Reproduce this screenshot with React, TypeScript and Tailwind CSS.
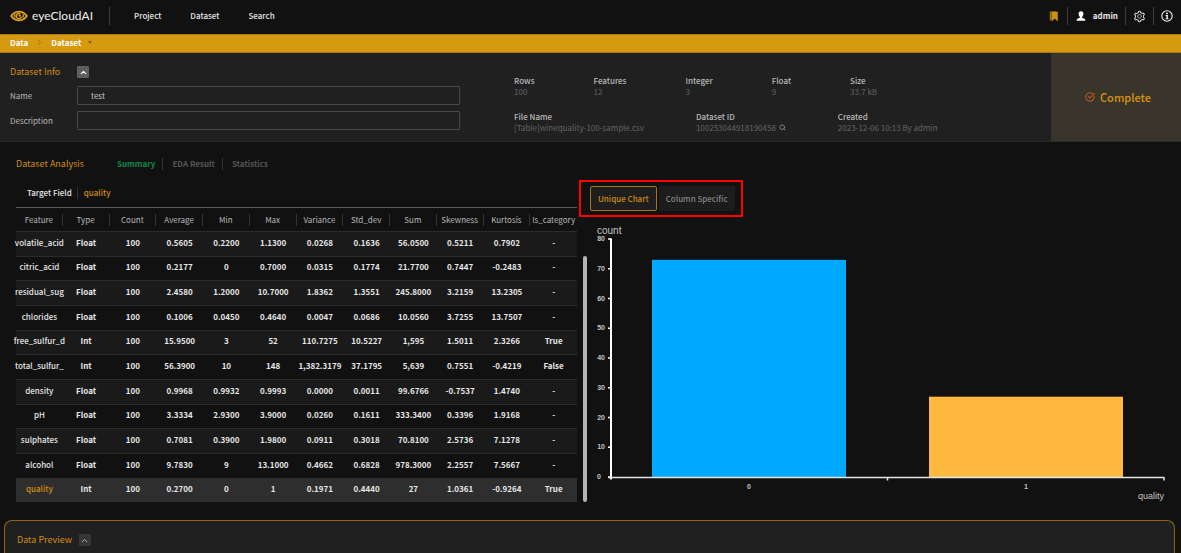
import React from 'react';
import { ChevronRight, ChevronUp, CircleCheckBig, Search } from 'lucide-react';
import { AiOutlineSetting } from 'react-icons/ai';

const columns = [
  'Feature', 'Type', 'Count', 'Average', 'Min', 'Max',
  'Variance', 'Std_dev', 'Sum', 'Skewness', 'Kurtosis', 'Is_category',
];

const rows = [
  ['volatile_acid', 'Float', '100', '0.5605', '0.2200', '1.1300', '0.0268', '0.1636', '56.0500', '0.5211', '0.7902', '-'],
  ['citric_acid', 'Float', '100', '0.2177', '0', '0.7000', '0.0315', '0.1774', '21.7700', '0.7447', '-0.2483', '-'],
  ['residual_sug', 'Float', '100', '2.4580', '1.2000', '10.7000', '1.8362', '1.3551', '245.8000', '3.2159', '13.2305', '-'],
  ['chlorides', 'Float', '100', '0.1006', '0.0450', '0.4640', '0.0047', '0.0686', '10.0560', '3.7255', '13.7507', '-'],
  ['free_sulfur_d', 'Int', '100', '15.9500', '3', '52', '110.7275', '10.5227', '1,595', '1.5011', '2.3266', 'True'],
  ['total_sulfur_', 'Int', '100', '56.3900', '10', '148', '1,382.3179', '37.1795', '5,639', '0.7551', '-0.4219', 'False'],
  ['density', 'Float', '100', '0.9968', '0.9932', '0.9993', '0.0000', '0.0011', '99.6766', '-0.7537', '1.4740', '-'],
  ['pH', 'Float', '100', '3.3334', '2.9300', '3.9000', '0.0260', '0.1611', '333.3400', '0.3396', '1.9168', '-'],
  ['sulphates', 'Float', '100', '0.7081', '0.3900', '1.9800', '0.0911', '0.3018', '70.8100', '2.5736', '7.1278', '-'],
  ['alcohol', 'Float', '100', '9.7830', '9', '13.1000', '0.4662', '0.6828', '978.3000', '2.2557', '7.5667', '-'],
  ['quality', 'Int', '100', '0.2700', '0', '1', '0.1971', '0.4440', '27', '1.0361', '-0.9264', 'True'],
];

const bars = [
  { label: '0', value: 73, fill: '#00a8ff', x: 62 },
  { label: '1', value: 27, fill: '#ffb840', x: 339 },
];

const yOf = (value: number) => 257 - value * 2.975;

function EyeLogo() {
  return (
    <svg viewBox="0 0 18 12" className="h-3 w-[18px]" fill="none" aria-hidden="true">
      <path d="M1.200 6C3.400 2.800 6 1.600 9 1.600S14.600 2.800 16.800 6C14.600 9.200 12 10.400 9 10.400S3.400 9.200 1.200 6Z" stroke="#e0a01a" strokeWidth="1.900" />
      <path d="M3.600 6C4.300 4.700 5 4 5.800 3.600C5.100 5 5.100 7 5.800 8.400C5 8 4.300 7.300 3.600 6ZM14.400 6C13.700 4.700 13 4 12.200 3.600C12.900 5 12.900 7 12.200 8.400C13 8 13.700 7.300 14.400 6Z" fill="#e0a01a" />
      <path d="M10.500 4A2.600 2.600 0 1 0 11.500 6.500" stroke="#e0a01a" strokeWidth="1.500" />
      <circle cx="9.600" cy="5.600" r="1.200" fill="#e0a01a" />
    </svg>
  );
}

function BookmarkIcon() {
  return (
    <svg viewBox="0 0 10 11" className="h-[11px] w-[10px]" aria-hidden="true">
      <path d="M0.800 0.500H7V1.300H2.300V8.500L0.800 10Z" fill="#a87808" />
      <path d="M2.500 0.800H8.800V10.500L5.700 7.500L2.500 10.500Z" fill="#c9920f" />
    </svg>
  );
}

function UserIcon() {
  return (
    <svg viewBox="0 0 10 10" className="size-[10px]" fill="#fff" aria-hidden="true">
      <path d="M5 0.200C6.700 0.200 7.500 1.400 7.400 2.900C7.300 4.200 6.800 5.100 6.200 5.700V6.700C7.800 7.300 9.400 7.700 9.500 9.700H0.500C0.600 7.700 2.200 7.300 3.800 6.700V5.700C3.200 5.100 2.700 4.200 2.600 2.900C2.500 1.400 3.300 0.200 5 0.200Z" />
    </svg>
  );
}

function InfoIcon() {
  return (
    <svg viewBox="0 0 12 12" className="size-3" fill="none" aria-hidden="true">
      <circle cx="6" cy="6" r="5.200" stroke="#f0f0f0" strokeWidth="1.100" />
      <circle cx="6" cy="3.400" r="0.900" fill="#fff" />
      <path d="M4.700 5.100H6.800V8.500H7.600V9.300H4.600V8.500H5.400V5.900H4.700Z" fill="#fff" />
    </svg>
  );
}

function Stat({ label, children }: { label: string; children: React.ReactNode }) {
  return (
    <div className="whitespace-nowrap">
      <dt className="font-medium leading-[11px] text-[#b8b8b8]">{label}</dt>
      <dd className="flex items-center gap-[3px] leading-[11px] text-[#636363]">{children}</dd>
    </div>
  );
}

function CountChart() {
  return (
    <svg viewBox="0 0 591 290" className="block w-full font-['Liberation_Sans',sans-serif]" role="img" aria-label="Count by quality">
      <text x="7" y="14" fontSize="10" fill="#c4c4c4">count</text>
      {bars.map((bar) => (
        <rect key={bar.label} x={bar.x} y={yOf(bar.value)} width="194" height={257 - yOf(bar.value)} fill={bar.fill} />
      ))}
      <g fill="#c4c4c4" fontSize="7" fontWeight="700">
        {[0, 10, 20, 30, 40, 50, 60, 70, 80].map((tick) => (
          <g key={tick}>
            <path d={`M18 ${yOf(tick)}H21`} stroke="#fff" strokeWidth="1.500" />
            <text x={tick === 0 ? 11 : 15} y={yOf(tick) + 2} textAnchor="end">{tick}</text>
          </g>
        ))}
        <text x="159" y="269" textAnchor="middle">0</text>
        <text x="436" y="269" textAnchor="middle">1</text>
      </g>
      <path d="M21 18.500V259.500" stroke="#fff" strokeWidth="2" />
      <path d="M18 257.500H574.500M297.500 257V260.500M574 257V260.500" stroke="#e4e4e4" strokeWidth="1.500" />
      <text x="574" y="279" fontSize="9" fill="#c4c4c4" textAnchor="end">quality</text>
    </svg>
  );
}

export default function App() {
  return (
    <div className="flex min-h-screen flex-col bg-[#111111] font-['Noto_Sans_CJK_KR','Noto_Sans',sans-serif] text-[8px] leading-3 text-[#e6e6e6]">
      <header className="flex h-[34px] items-center justify-between pr-2 pl-[10px]">
        <div className="flex h-full items-center pb-[2px]">
          <a href="#" className="flex items-center gap-1">
            <EyeLogo />
            <span className="font-['Lato',sans-serif] text-[12px] leading-4 text-[#efefef]">eyeCloudAI</span>
          </a>
          <nav className="ml-4 flex items-center gap-[29px] border-l border-[#3c3c3c] py-[3px] pl-6 font-medium">
            <a href="#">Project</a>
            <a href="#">Dataset</a>
            <a href="#">Search</a>
          </nav>
        </div>
        <div className="flex items-center pb-[2px]">
          <button aria-label="Bookmarks" className="pr-2"><BookmarkIcon /></button>
          <button className="flex h-[18px] items-center gap-[7px] border-l border-[#3c3c3c] pr-[7px] pl-2 font-bold">
            <UserIcon />
            admin
          </button>
          <button aria-label="Settings" className="h-[18px] border-x border-[#3c3c3c] px-[7px]">
            <AiOutlineSetting className="size-[13px] text-[#dcdcdc]" />
          </button>
          <button aria-label="About" className="pl-[7px]"><InfoIcon /></button>
        </div>
      </header>

      <nav aria-label="Breadcrumb" className="flex h-[19px] items-center border-y border-[#a97a10] bg-[#d69a10] px-[10px] pb-[2px] font-bold text-white">
        <a href="#">Data</a>
        <ChevronRight className="mx-[7px] size-[9px] text-[#8a6a24]" />
        <button className="flex items-center gap-[7px]">
          Dataset
          <svg viewBox="0 0 4 3" className="h-[3px] w-1" aria-hidden="true"><path d="M0 0H4L2 3Z" fill="#7d6020" /></svg>
        </button>
      </nav>

      <section className="flex h-[89px] border-b border-[#2a2a2a] bg-[#202020]">
        <div className="w-[460px] shrink-0 pt-3 pl-[10px]">
          <div className="flex items-center">
            <h2 className="w-[67px] text-[9px] leading-[14px] text-[#d08c10]">Dataset Info</h2>
            <button aria-label="Collapse dataset info" className="flex size-3 items-center justify-center rounded-[1px] bg-[#5e5e5e]">
              <ChevronUp className="size-[9px] text-white" strokeWidth={3} />
            </button>
          </div>
          <div className="mt-[7px] flex items-center">
            <label htmlFor="name" className="w-[67px] text-[#b8b8b8]">Name</label>
            <input id="name" defaultValue="test" className="h-[19px] min-w-0 flex-1 rounded-[1px] border border-[#484848] bg-transparent px-[13px] text-[#c8c8c8]" />
          </div>
          <div className="mt-[6px] flex items-center">
            <label htmlFor="description" className="w-[67px] text-[#b8b8b8]">Description</label>
            <input id="description" className="h-[19px] min-w-0 flex-1 rounded-[1px] border border-[#484848] bg-transparent px-[13px] text-[#c8c8c8]" />
          </div>
        </div>
        <div className="flex flex-1 flex-col gap-[14px] pt-[22px] pl-[54px]">
          <dl className="flex gap-[59px]">
            <Stat label="Rows">100</Stat>
            <Stat label="Features">12</Stat>
            <Stat label="Integer">3</Stat>
            <Stat label="Float">9</Stat>
            <Stat label="Size">33.7 kB</Stat>
          </dl>
          <dl className="flex gap-[52px]">
            <Stat label="File Name">[Table]winequality-100-sample.csv</Stat>
            <Stat label="Dataset ID">
              100253044918190458
              <button aria-label="Look up dataset"><Search className="size-[7px] text-[#8a8a8a]" strokeWidth={3} /></button>
            </Stat>
            <Stat label="Created">2023-12-06 10:13 By admin</Stat>
          </dl>
        </div>
        <div className="flex w-[130px] shrink-0 items-center justify-center gap-[5px] bg-[#3a352a] pl-1 text-[11px] font-medium text-[#d8960f]">
          <CircleCheckBig className="size-[10px] text-[#c05f20]" strokeWidth={2.5} />
          Complete
        </div>
      </section>

      <main className="flex h-[378px] pb-[18px]">
        <section className="w-[590px] shrink-0 pt-4 pl-4">
          <div className="flex items-center">
            <h2 className="w-[101px] text-[9px] text-[#d08c10]">Dataset Analysis</h2>
            <div className="flex divide-x divide-[#333333] font-bold text-[#555555]">
              <button className="pr-[7px] text-[#0c8a48]">Summary</button>
              <button className="pr-[7px] pl-[9px]">EDA Result</button>
              <button className="pl-[9px]">Statistics</button>
            </div>
          </div>
          <div className="mt-[17px] flex pl-[11px] font-medium">
            <span className="pr-[5px]">Target Field</span>
            <span className="border-l border-[#333333] pl-[6px] text-[#d08c10]">quality</span>
          </div>
          <div className="mt-2 flex items-end gap-[6px]">
            <table className="h-[295px] w-[561px] table-fixed border-collapse border-t border-[#5a5a5a] text-center">
              <thead>
                <tr className="h-6">
                  {columns.map((name, i) => (
                    <th key={name} scope="col" className="p-0 font-normal text-[#b8b8b8]">
                      <div className={i < 11 ? 'border-r border-[#333333]' : ''}>{name}</div>
                    </th>
                  ))}
                </tr>
              </thead>
              <tbody>
                {rows.map((row, r) => (
                  <tr key={row[0]} className={r === 10 ? 'border-t border-[#2b2b2b] bg-[#2e2e2e]' : r % 2 === 0 ? 'border-t border-[#2b2b2b] bg-[#1a1a1a]' : 'border-t border-[#2b2b2b]'}>
                    {row.map((cell, c) => (
                      <td key={c} className={c > 0 ? 'p-0 pb-[2px] font-bold whitespace-nowrap' : r === 10 ? 'p-0 pb-[2px] font-medium text-[#d08c10]' : 'p-0 pb-[2px] font-medium'}>
                        <div className="flex justify-center whitespace-nowrap">{cell}</div>
                      </td>
                    ))}
                  </tr>
                ))}
              </tbody>
            </table>
            <div className="h-[246px] w-1 rounded-full bg-[#b4b4b4]" />
          </div>
        </section>

        <section className="min-w-0 flex-1 pt-[38px]">
          <div className="-ml-[11px] flex w-fit gap-[2px] border-2 border-[#ff0000] py-1 pr-[6px] pl-[9px] font-medium">
            <button className="h-[25px] rounded-[2px] border border-[#a97512] bg-[#1e1e1e] px-[7px] text-[#d08c10]">Unique Chart</button>
            <button className="h-[25px] rounded-[2px] bg-[#1c1c1c] px-[7px] text-[#858585]">Column Specific</button>
          </div>
          <div className="mt-[3px]">
            <CountChart />
          </div>
        </section>
      </main>

      <section className="mr-[6px] ml-1 flex-1 rounded-t-[8px] border border-b-0 border-[#8f6412] bg-[#202020] px-3 pt-[13px]">
        <div className="flex items-center gap-[7px]">
          <h2 className="text-[9px] text-[#d08c10]">Data Preview</h2>
          <button aria-label="Collapse data preview" className="flex size-3 items-center justify-center rounded-[1px] bg-[#363636]">
            <ChevronUp className="size-[9px] text-[#bdbdbd]" strokeWidth={2.5} />
          </button>
        </div>
      </section>
    </div>
  );
}
